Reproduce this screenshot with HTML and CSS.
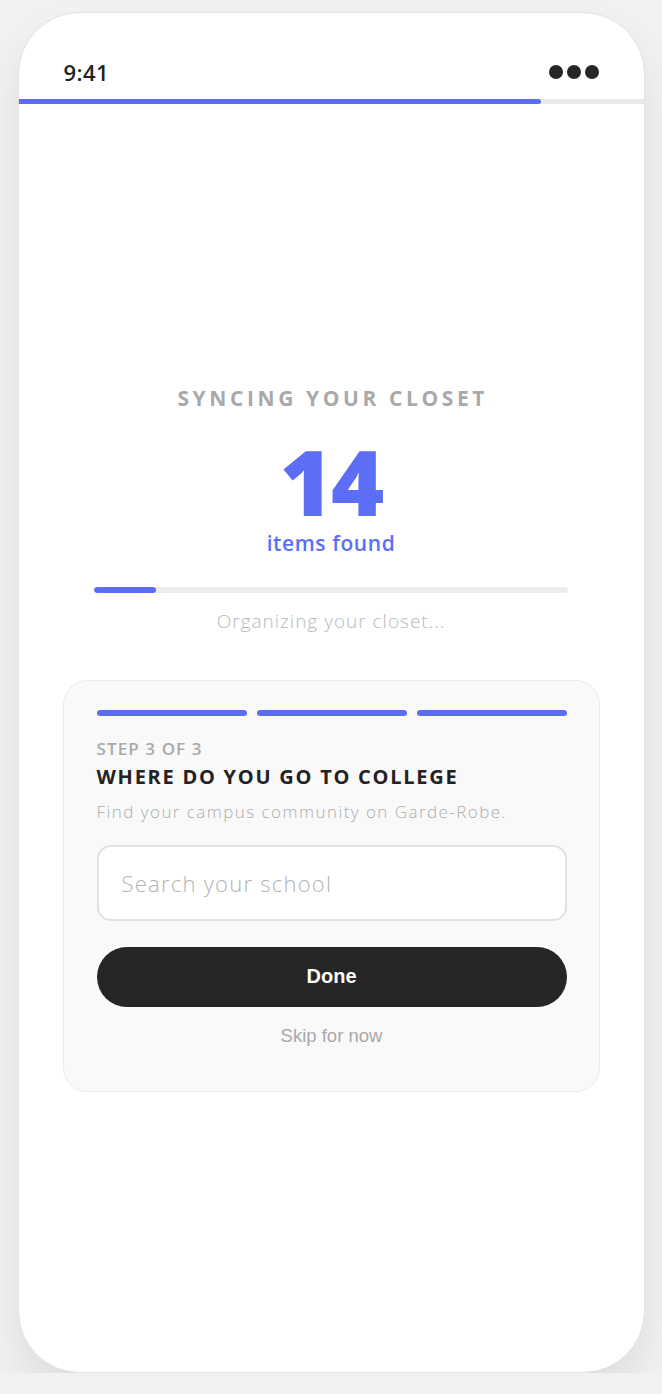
FILE: index.html
```html
<!DOCTYPE html>
<html lang="en">
<head>
    <meta charset="UTF-8">
    <meta name="viewport" content="width=device-width, initial-scale=1.0">
    <title>Garde-Robe - Syncing</title>
    <link rel="stylesheet" href="styles.css">
</head>
<body>
    <div class="phone">
        <div class="status-bar">
            <span class="time">9:41</span>
            <span class="signal">
                <span class="dot"></span>
                <span class="dot"></span>
                <span class="dot"></span>
            </span>
        </div>

        <div class="top-progress">
            <div class="top-progress-fill"></div>
        </div>

        <div class="screen">
            <!-- Sync status -->
            <div class="sync">
                <div class="sync-title">SYNCING YOUR CLOSET</div>
                <div class="sync-count">14</div>
                <div class="sync-label">items found</div>
                <div class="sync-bar">
                    <div class="sync-bar-fill" style="width: 13%;"></div>
                </div>
                <div class="sync-note">Organizing your closet...</div>
            </div>

            <!-- Onboarding card -->
            <div class="card">
                <div class="segments">
                    <div class="segment done"></div>
                    <div class="segment done"></div>
                    <div class="segment done"></div>
                </div>
                <div class="step-label">STEP 3 OF 3</div>
                <h2 class="card-title">WHERE DO YOU GO TO COLLEGE</h2>
                <p class="card-text">Find your campus community on Garde-Robe.</p>
                <input type="text" class="school-input" placeholder="Search your school">
                <button class="button">Done</button>
                <div class="skip">Skip for now</div>
            </div>
        </div>
    </div>
</body>
</html>
```

FILE: styles.css
```css
* {
    margin: 0;
    padding: 0;
    box-sizing: border-box;
}

body {
    font-family: "Open Sans", sans-serif;
    background: #f1f1f1;
    padding-top: 12px;
}

.phone {
    width: 627px;
    height: 1361px;
    margin: 0 auto;
    background: #fff;
    border: 1px solid #e2e2e2;
    border-radius: 62px;
    box-shadow: 0 24px 40px rgba(0, 0, 0, 0.08);
    overflow: hidden;
    display: flex;
    flex-direction: column;
}

.status-bar {
    height: 86px;
    display: flex;
    align-items: center;
    justify-content: space-between;
    padding: 32px 45px 0 45px;
}

.time {
    font-size: 22px;
    font-weight: 600;
    color: #222;
    letter-spacing: 0.4px;
}

.signal {
    display: flex;
    gap: 4px;
}

.dot {
    width: 14px;
    height: 14px;
    border-radius: 50%;
    background: #262626;
}

.top-progress {
    height: 5px;
    background: #ebebeb;
}

.top-progress-fill {
    width: 522px;
    height: 100%;
    background: #5b6ef5;
    border-radius: 0 3px 3px 0;
}

.screen {
    flex: 1;
    display: flex;
    flex-direction: column;
    align-items: center;
    justify-content: center;
}

.sync {
    width: 474px;
    text-align: center;
}

.sync-title {
    font-size: 21px;
    line-height: 28px;
    font-weight: 700;
    color: #a9a9a9;
    letter-spacing: 3.6px;
    text-indent: 3.6px;
}

.sync-count {
    font-size: 91px;
    line-height: 70px;
    font-weight: 800;
    color: #5b6ef5;
    margin-top: 34px;
    letter-spacing: -2px;
}

.sync-label {
    font-size: 21px;
    line-height: 28px;
    font-weight: 600;
    color: #5b6ef5;
    letter-spacing: 0.6px;
    margin-top: 13px;
}

.sync-bar {
    height: 6px;
    background: #ececec;
    border-radius: 3px;
    margin-top: 30px;
    overflow: hidden;
}

.sync-bar-fill {
    height: 100%;
    background: #5b6ef5;
    border-radius: 3px;
}

.sync-note {
    font-size: 19px;
    line-height: 26px;
    font-weight: 300;
    color: #b9b9b9;
    letter-spacing: 1px;
    margin-top: 15px;
}

.card {
    width: 537px;
    margin-top: 46px;
    background: #f9f9f9;
    border: 1.5px solid #ebebeb;
    border-radius: 24px;
    padding: 28.5px 32px 44px 33px;
}

.segments {
    display: flex;
    gap: 10px;
}

.segment {
    flex: 1;
    height: 6px;
    border-radius: 3px;
    background: #e0e0e0;
}

.segment.done {
    background: #5b6ef5;
}

.step-label {
    font-size: 17px;
    line-height: 22px;
    font-weight: 600;
    color: #a9a9a9;
    letter-spacing: 1.1px;
    margin-top: 22px;
}

.card-title {
    font-size: 20px;
    line-height: 26px;
    font-weight: 700;
    color: #222;
    letter-spacing: 1.75px;
    margin-top: 4px;
}

.card-text {
    font-size: 17px;
    line-height: 22px;
    font-weight: 300;
    color: #adadad;
    letter-spacing: 1.45px;
    margin-top: 11px;
}

.school-input {
    display: block;
    width: 100%;
    height: 76px;
    margin-top: 22px;
    padding: 0 23px;
    border: 2px solid #e2e2e2;
    border-radius: 14px;
    background: #fff;
    font-family: "Open Sans", sans-serif;
    font-size: 22px;
    font-weight: 300;
    letter-spacing: 1.25px;
    color: #222;
    outline: none;
}

.school-input::placeholder {
    color: #b3b3b3;
}

.button {
    display: block;
    width: 100%;
    height: 60px;
    margin-top: 26px;
    border: none;
    border-radius: 30px;
    background: #262626;
    color: #fff;
    font-family: "Liberation Sans", Arial, sans-serif;
    font-size: 20px;
    font-weight: 700;
    cursor: pointer;
}

.skip {
    text-align: center;
    font-family: "Liberation Sans", Arial, sans-serif;
    font-size: 18.5px;
    line-height: 22px;
    color: #a8a8a8;
    margin-top: 18px;
}
```
